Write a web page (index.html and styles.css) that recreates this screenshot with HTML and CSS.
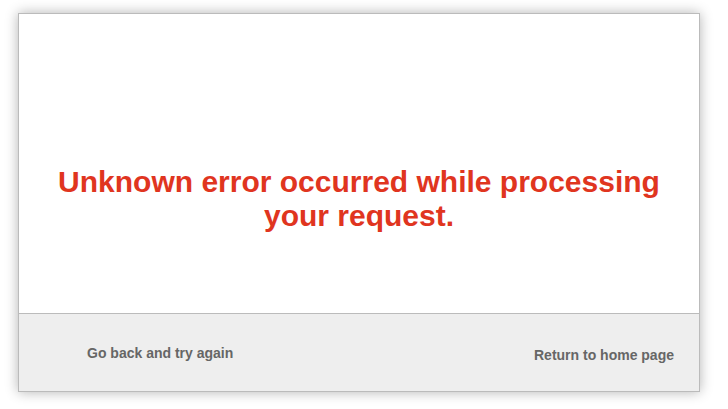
FILE: index.html
```html
<!DOCTYPE html>
<html lang="en">
<head>
  <meta charset="UTF-8" />
  <meta name="viewport" content="width=device-width, initial-scale=1.0"/>
  <title>Error</title>
  <link rel="stylesheet" href="styles.css">
</head>
<body>

  <!-- Error dialog -->
  <div class="error-box">
    <div class="error-body">
      <h1 class="error-title">Unknown error occurred while processing your request.</h1>
    </div>

    <div class="error-footer">
      <a href="#" class="back-link">Go back and try again</a>
      <a href="#" class="home-link">Return to home page</a>
    </div>
  </div>

</body>
</html>
```

FILE: styles.css
```css
* {
  box-sizing: border-box;
}

html, body {
  margin: 0;
  padding: 0;
  background-color: #ffffff;
  font-family: "Liberation Sans", Arial, sans-serif;
}

body {
  padding: 13px 28px 18px 18px;
}

/* Dialog box */
.error-box {
  border: 1px solid #bbbbbb;
  background: #ffffff;
  box-shadow: 0 0 12px rgba(0, 0, 0, 0.3);
}

.error-body {
  height: 299px;
  padding: 151px 30px 0;
}

.error-title {
  margin: 0;
  font-size: 30px;
  font-weight: bold;
  line-height: normal;
  color: #e0351f;
  text-align: center;
}

/* Footer links */
.error-footer {
  height: 78px;
  border-top: 1px solid #bbbbbb;
  background-color: #eeeeee;
  display: flex;
  justify-content: space-between;
  align-items: center;
  padding: 0 25px 0 68px;
}

.error-footer a {
  font-size: 14px;
  font-weight: bold;
  color: #666666;
  text-decoration: none;
}

.home-link {
  margin-top: 4px;
}
```
